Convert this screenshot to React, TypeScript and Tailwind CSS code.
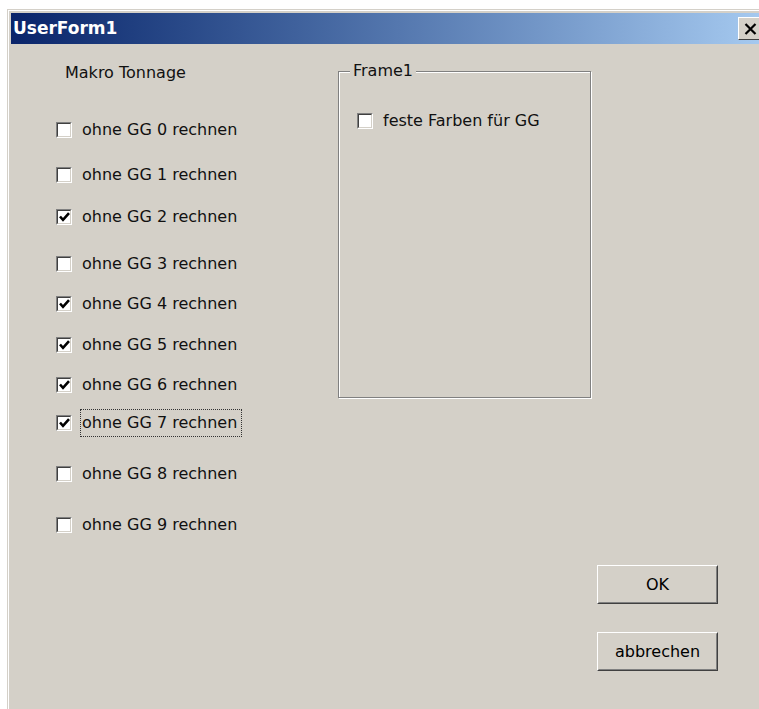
import React from 'react';

const face = { fontFamily: '"DejaVu Sans", Verdana, sans-serif' };

interface CheckBoxProps {
    label: string;
    checked?: boolean;
    focused?: boolean;
    className?: string;
}

// Sunken classic checkbox: gray/dark top-left edges, light/white bottom-right edges
const Box: React.FC<{ checked?: boolean }> = ({ checked }) => (
    <div className="w-[16px] h-[16px] shrink-0 border border-t-[#808080] border-l-[#808080] border-b-white border-r-white">
        <div className="w-full h-full border border-t-[#404040] border-l-[#404040] border-b-[#d4d0c8] border-r-[#d4d0c8] bg-white flex items-center justify-center">
            {checked && (
                <svg width="11" height="10" viewBox="0 0 11 10">
                    <path d="M1 4.5 L4 7.8 L10 1.2" fill="none" stroke="#000" strokeWidth="2.6" strokeLinejoin="miter" />
                </svg>
            )}
        </div>
    </div>
);

const CheckBox: React.FC<CheckBoxProps> = ({ label, checked, focused, className }) => (
    <div className={`flex items-center h-[28px] ${className ?? ''}`}>
        <Box checked={checked} />
        <span
            className={`ml-[8px] h-full flex items-center pl-[1px] pr-[4px] border border-dotted ${focused ? 'border-[#333]' : 'border-transparent'}`}
        >
            {label}
        </span>
    </div>
);

const RaisedButton: React.FC<{ children: React.ReactNode; className?: string }> = ({ children, className }) => (
    <button
        className={`w-[121px] h-[39px] bg-[#d4d0c8] border border-t-white border-l-white border-b-[#404040] border-r-[#404040] ${className ?? ''}`}
    >
        <div className="w-full h-full flex items-center justify-center border border-t-[#d4d0c8] border-l-[#d4d0c8] border-b-[#808080] border-r-[#808080] text-black">
            {children}
        </div>
    </button>
);

const rows: { n: number; checked: boolean; mt: string }[] = [
    { n: 0, checked: false, mt: 'mt-[33px]' },
    { n: 1, checked: false, mt: 'mt-[17px]' },
    { n: 2, checked: true, mt: 'mt-[14px]' },
    { n: 3, checked: false, mt: 'mt-[19px]' },
    { n: 4, checked: true, mt: 'mt-[12px]' },
    { n: 5, checked: true, mt: 'mt-[13px]' },
    { n: 6, checked: true, mt: 'mt-[12px]' },
    { n: 7, checked: true, mt: 'mt-[10px]' },
    { n: 8, checked: false, mt: 'mt-[23px]' },
    { n: 9, checked: false, mt: 'mt-[23px]' },
];

export default function App() {
    return (
        <div className="w-[759px] h-[709px] overflow-hidden bg-white" style={face}>
            <div className="ml-[7px] mt-[9px] w-[770px] h-[720px] border-l border-t border-[#d4d0c8]">
                <div className="w-full h-full border-l border-t border-white bg-[#d4d0c8] pl-[2px] pt-[2px]">
                    {/* title bar */}
                    <div className="w-[753px] h-[31px] flex items-center pl-[2px] pr-[2px] bg-gradient-to-r from-[#0a246a] to-[#a6caf0]">
                        <span className="text-white font-bold text-[17px] leading-none">UserForm1</span>
                        <div className="ml-auto w-[24px] h-[23px] bg-[#d4d0c8] border border-t-white border-l-white border-b-[#404040] border-r-[#404040] flex items-center justify-center">
                            <svg width="13" height="12" viewBox="0 0 13 12">
                                <path d="M1.5 1 L11.5 11 M11.5 1 L1.5 11" stroke="#000" strokeWidth="2.2" />
                            </svg>
                        </div>
                    </div>

                    {/* form body */}
                    <div className="flex text-[16px] text-[#111]">
                        <div className="w-[327px] pl-[45px] flex flex-col">
                            <div className="mt-[19px] h-[20px] leading-[20px] pl-[9px]">Makro Tonnage</div>
                            {rows.map((r) => (
                                <CheckBox
                                    key={r.n}
                                    className={r.mt}
                                    label={`ohne GG ${r.n} rechnen`}
                                    checked={r.checked}
                                    focused={r.n === 7}
                                />
                            ))}
                        </div>

                        <div className="relative mt-[27px] w-[253px] h-[327px] border border-[#808080] shadow-[1px_1px_0_#fff,inset_1px_1px_0_#fff]">
                            <span className="absolute -top-[11px] left-[11px] px-[3px] bg-[#d4d0c8] leading-[20px]">Frame1</span>
                            <CheckBox className="mt-[35px] ml-[18px]" label="feste Farben für GG" />
                        </div>

                        <div className="ml-[6px] mt-[521px] flex flex-col">
                            <RaisedButton>OK</RaisedButton>
                            <RaisedButton className="mt-[28px]">abbrechen</RaisedButton>
                        </div>
                    </div>
                </div>
            </div>
        </div>
    );
}
